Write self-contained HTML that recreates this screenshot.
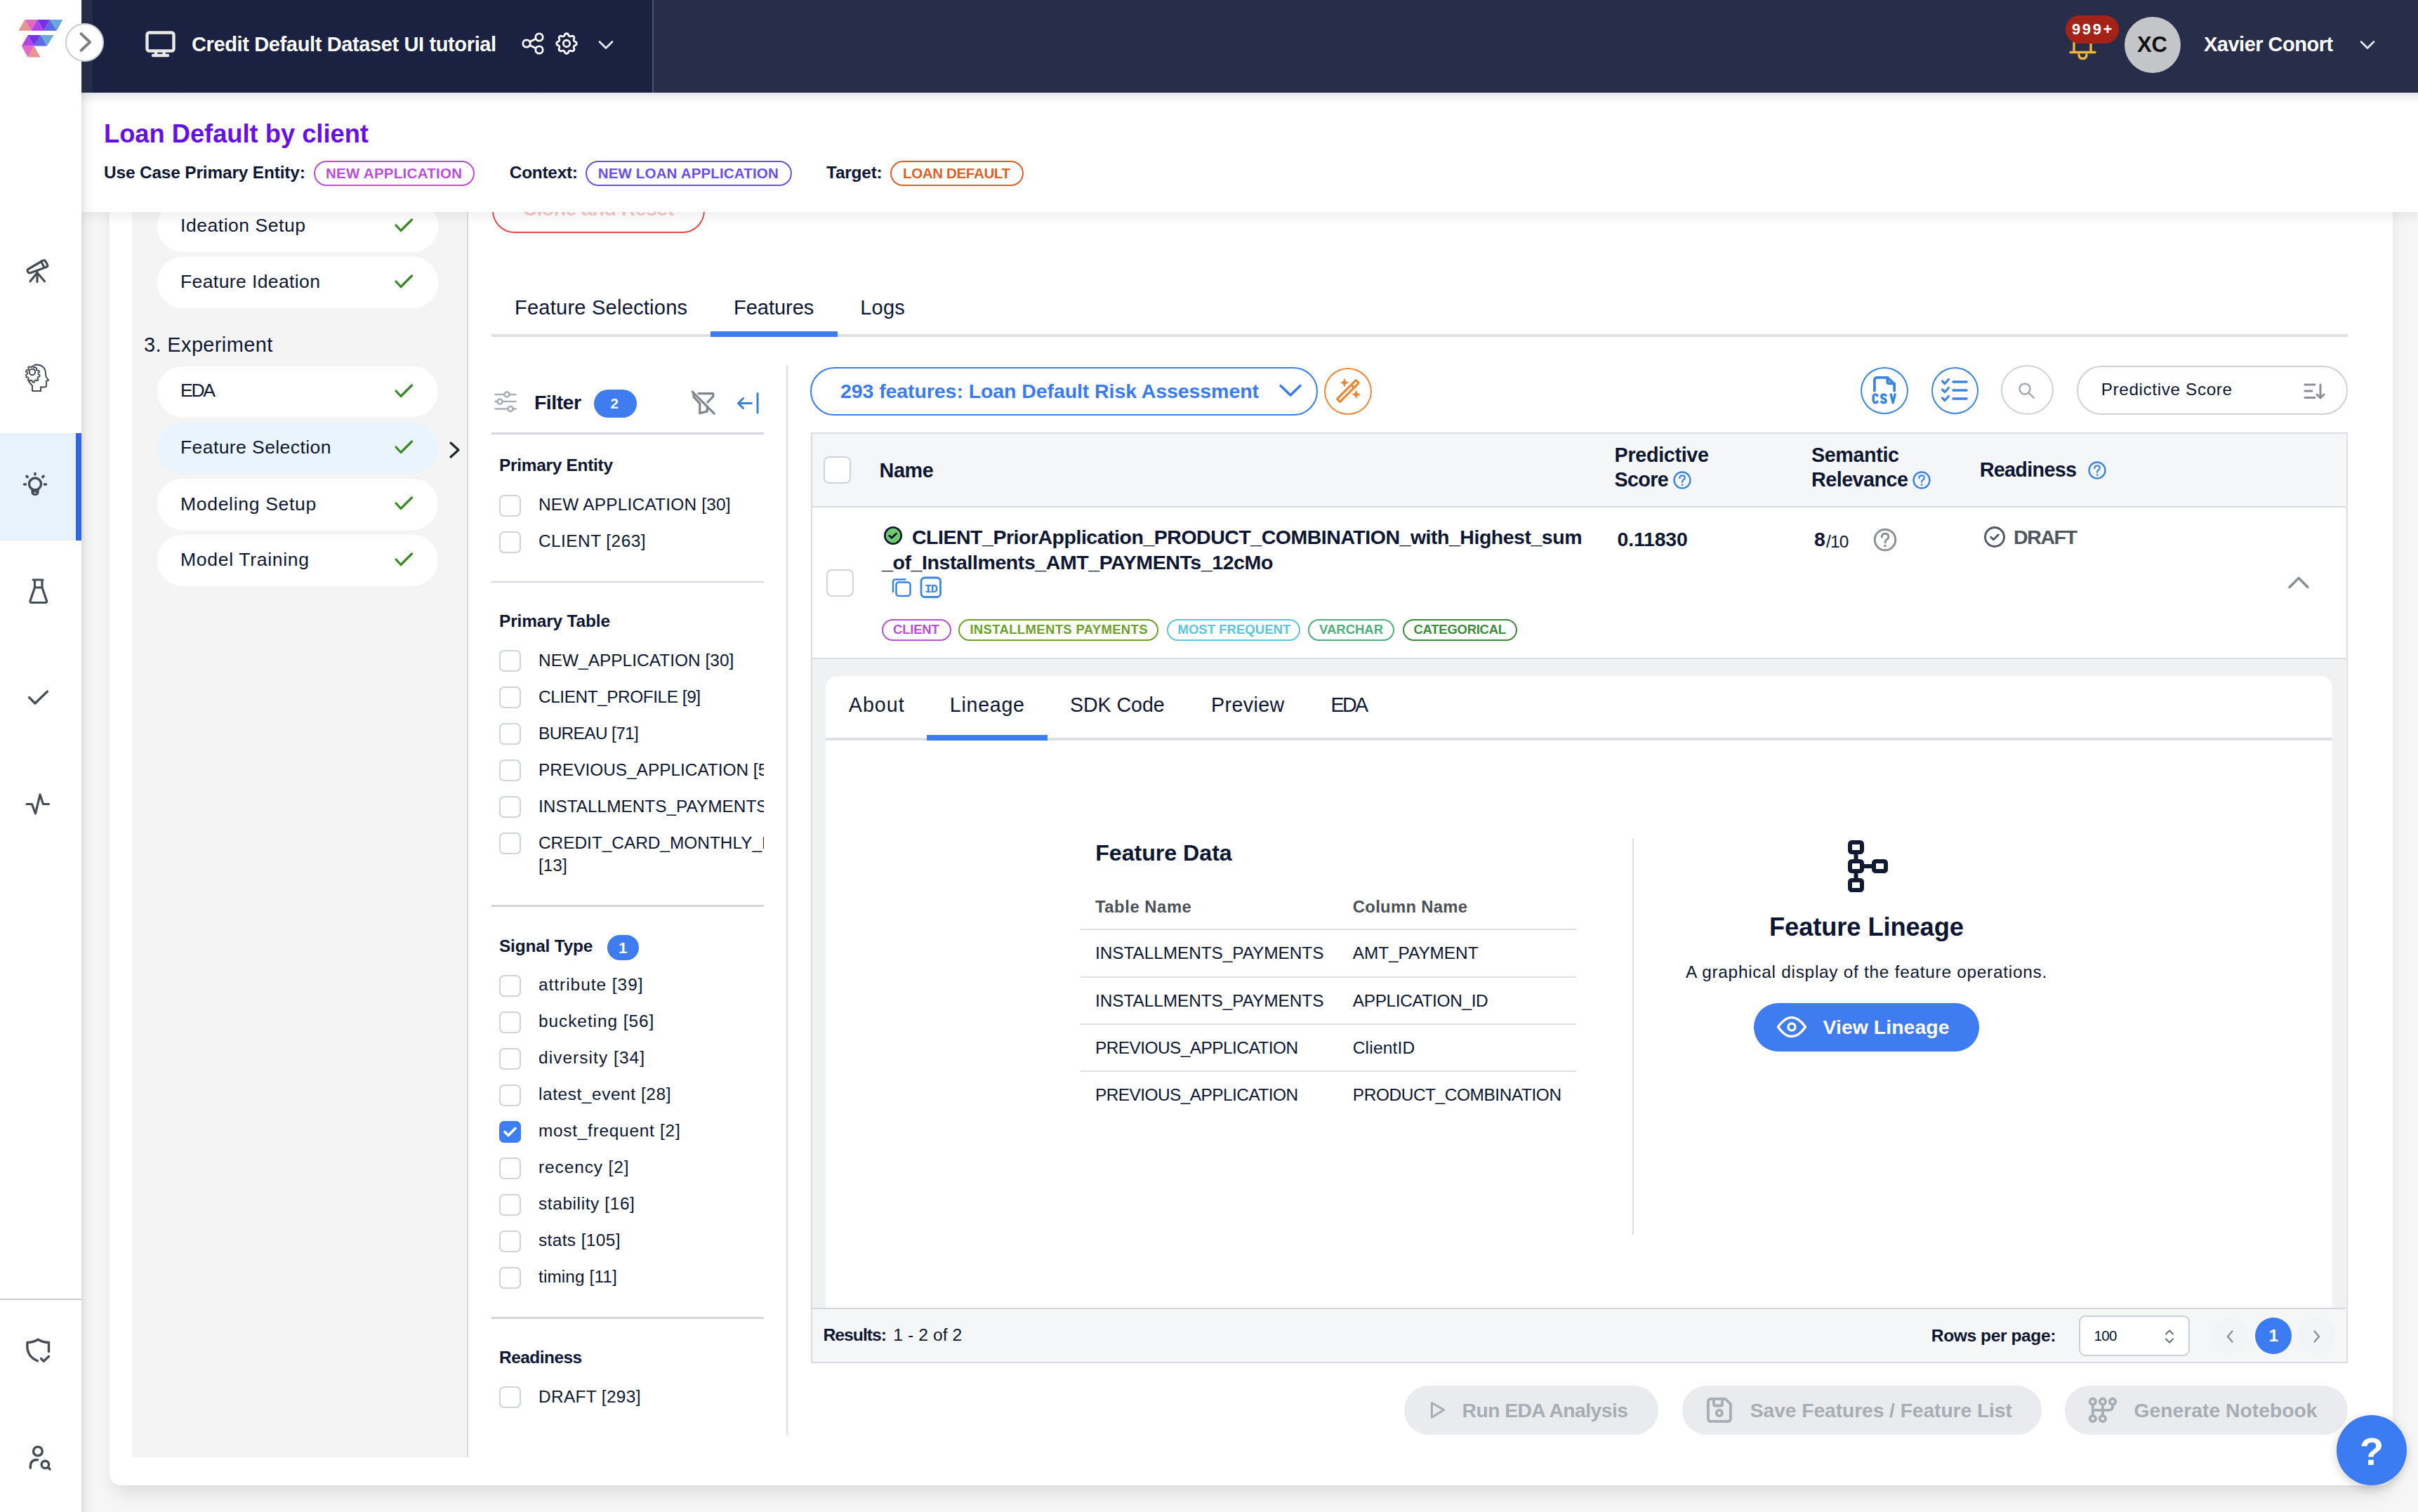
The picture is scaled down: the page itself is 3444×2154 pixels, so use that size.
<!DOCTYPE html>
<html><head><meta charset="utf-8"><title>Feature Selection</title>
<style>html,body{margin:0;padding:0;}
body{width:3444px;height:2154px;position:relative;overflow:hidden;background:#f6f6f7;font-family:"Liberation Sans",sans-serif;color:#0d1633;}
.a{position:absolute;box-sizing:border-box;}
.t{position:absolute;line-height:1;white-space:nowrap;}
svg{position:absolute;overflow:visible;}
</style></head>
<body>
<div class="a" style="left:156.0px;top:180.0px;width:3252.0px;height:1936.0px;background:#fff;border-radius:16px;box-shadow:0 16px 28px -8px rgba(0,0,0,0.13);"></div>
<div class="a" style="left:188.0px;top:180.0px;width:479.0px;height:1896.0px;background:#f4f4f5;border-right:2px solid #d9dce1;"></div>
<div class="a" style="left:224.0px;top:286.0px;width:400.0px;height:72.5px;background:#fff;border-radius:36px;"></div>
<div class="t step0" style="left:257.0px;top:308.3px;font-size:26.5px;letter-spacing:0.54px;">Ideation Setup</div>
<svg style="left:562px;top:311.0px" width="26" height="20" viewBox="0 0 26 20"><path d="M2 10 L9 17.5 L24.5 2" fill="none" stroke="#3a8a27" stroke-width="3.2" stroke-linecap="round" stroke-linejoin="round"/></svg>
<div class="a" style="left:224.0px;top:366.0px;width:400.0px;height:72.5px;background:#fff;border-radius:36px;"></div>
<div class="t step1" style="left:257.0px;top:388.4px;font-size:26.5px;letter-spacing:0.40px;">Feature Ideation</div>
<svg style="left:562px;top:391.0px" width="26" height="20" viewBox="0 0 26 20"><path d="M2 10 L9 17.5 L24.5 2" fill="none" stroke="#3a8a27" stroke-width="3.2" stroke-linecap="round" stroke-linejoin="round"/></svg>
<div class="a" style="left:224.0px;top:521.5px;width:400.0px;height:72.5px;background:#fff;border-radius:36px;"></div>
<div class="t step2" style="left:257.0px;top:543.1px;font-size:26.5px;letter-spacing:-2.25px;">EDA</div>
<svg style="left:562px;top:546.5px" width="26" height="20" viewBox="0 0 26 20"><path d="M2 10 L9 17.5 L24.5 2" fill="none" stroke="#3a8a27" stroke-width="3.2" stroke-linecap="round" stroke-linejoin="round"/></svg>
<div class="a" style="left:224.0px;top:602.0px;width:400.0px;height:72.5px;background:#eaf4fd;border-radius:36px;"></div>
<div class="t step3" style="left:257.0px;top:624.0px;font-size:26.5px;letter-spacing:0.42px;">Feature Selection</div>
<svg style="left:562px;top:627.0px" width="26" height="20" viewBox="0 0 26 20"><path d="M2 10 L9 17.5 L24.5 2" fill="none" stroke="#3a8a27" stroke-width="3.2" stroke-linecap="round" stroke-linejoin="round"/></svg>
<div class="a" style="left:224.0px;top:682.0px;width:400.0px;height:72.5px;background:#fff;border-radius:36px;"></div>
<div class="t step4" style="left:257.0px;top:704.6px;font-size:26.5px;letter-spacing:0.70px;">Modeling Setup</div>
<svg style="left:562px;top:707.0px" width="26" height="20" viewBox="0 0 26 20"><path d="M2 10 L9 17.5 L24.5 2" fill="none" stroke="#3a8a27" stroke-width="3.2" stroke-linecap="round" stroke-linejoin="round"/></svg>
<div class="a" style="left:224.0px;top:762.0px;width:400.0px;height:72.5px;background:#fff;border-radius:36px;"></div>
<div class="t step5" style="left:257.0px;top:783.9px;font-size:26.5px;letter-spacing:0.71px;">Model Training</div>
<svg style="left:562px;top:787.0px" width="26" height="20" viewBox="0 0 26 20"><path d="M2 10 L9 17.5 L24.5 2" fill="none" stroke="#3a8a27" stroke-width="3.2" stroke-linecap="round" stroke-linejoin="round"/></svg>
<div class="t exp" style="left:205.0px;top:476.5px;font-size:28.9px;letter-spacing:0.41px;">3. Experiment</div>
<svg style="left:639px;top:628px" width="18" height="26" viewBox="0 0 18 26"><path d="M3 3 L14 13 L3 23" fill="none" stroke="#23262b" stroke-width="3.2" stroke-linecap="round" stroke-linejoin="round"/></svg>
<div class="a" style="left:700.7px;top:240.0px;width:303.0px;height:91.5px;border:2.2px solid #e84a44;border-radius:32px;background:#fff;"></div>
<div class="t clone" style="left:744.4px;top:283.2px;font-size:28.5px;font-weight:700;color:#f3c9c9;letter-spacing:-0.54px;">Clone and Reset</div>
<div class="a" style="left:700.0px;top:476.0px;width:2644.0px;height:4.0px;background:#dde0e5;"></div>
<div class="a" style="left:1012.0px;top:472.0px;width:181.0px;height:8.0px;background:#3d7cf0;"></div>
<div class="t tab1" style="left:733.0px;top:423.5px;font-size:29.0px;letter-spacing:0.25px;">Feature Selections</div>
<div class="t tab2" style="left:1045.0px;top:423.5px;font-size:29.0px;letter-spacing:-0.02px;">Features</div>
<div class="t tab3" style="left:1225.3px;top:423.5px;font-size:29.0px;letter-spacing:0.17px;">Logs</div>
<div class="a" style="left:1120.0px;top:520.0px;width:2.0px;height:1524.0px;background:#d9dce1;"></div>
<svg style="left:704px;top:557px" width="32" height="34" viewBox="0 0 32 34" fill="none" stroke="#a9aeb4" stroke-width="2.6" stroke-linecap="round"><path d="M1.5 5h29M1.5 15h29M1.5 25.5h29"/><circle cx="18" cy="5" r="3.5" fill="#fff"/><circle cx="8" cy="15" r="3.5" fill="#fff"/><circle cx="23" cy="25.5" r="3.5" fill="#fff"/></svg>
<div class="t filter" style="left:761.0px;top:558.9px;font-size:28.5px;font-weight:700;letter-spacing:-0.54px;">Filter</div>
<div class="a" style="left:845.6px;top:555.0px;width:61.5px;height:40.0px;background:#3e7cf0;border-radius:20px;"></div>
<div class="t b2" style="left:869.5px;top:565.3px;font-size:20.5px;font-weight:700;color:#fff;">2</div>
<svg style="left:975px;top:545px" width="50" height="50" viewBox="0 0 50 50" fill="none" stroke="#80868d" stroke-width="3.2" stroke-linecap="round" stroke-linejoin="round"><path d="M19.9 15.6H40.7V19.9L32.8 28"/><path d="M13 14.9V20.3L21.8 29.8V43.7L32.3 40.9V34.2"/><path d="M11.2 13.2L42.2 44.2"/></svg>
<svg style="left:1049px;top:558px" width="34" height="34" viewBox="0 0 34 34" fill="none" stroke="#3b82d6" stroke-width="3" stroke-linecap="round" stroke-linejoin="round"><path d="M2.5 16.5h19M9.5 9.5l-7 7 7 7M30 2.5v27.5"/></svg>
<div class="a" style="left:700.0px;top:616.0px;width:388.0px;height:2.5px;background:#d3d8de;"></div>
<div class="t sec1" style="left:711.0px;top:651.3px;font-size:24.4px;font-weight:700;letter-spacing:-0.26px;">Primary Entity</div>
<div class="a" style="left:710.6px;top:704.5px;width:31.0px;height:31.0px;background:#fff;border:2px solid #cfd4db;border-radius:7px;"></div>
<div class="t pe0" style="left:767.0px;top:707.3px;font-size:24.4px;letter-spacing:0.23px;">NEW APPLICATION [30]</div>
<div class="a" style="left:710.6px;top:756.5px;width:31.0px;height:31.0px;background:#fff;border:2px solid #cfd4db;border-radius:7px;"></div>
<div class="t pe1" style="left:767.0px;top:759.3px;font-size:24.4px;letter-spacing:0.47px;">CLIENT [263]</div>
<div class="a" style="left:700.0px;top:827.5px;width:388.0px;height:2.5px;background:#d3d8de;"></div>
<div class="t sec2" style="left:711.0px;top:873.3px;font-size:24.4px;font-weight:700;letter-spacing:-0.13px;">Primary Table</div>
<div class="a" style="left:700px;top:900px;width:388px;height:380px;overflow:hidden;">
<div class="t pt0" style="left:67px;top:29.2px;font-size:24.4px;letter-spacing:0.05px;">NEW_APPLICATION [30]</div>
<div class="t pt1" style="left:67px;top:81.2px;font-size:24.4px;letter-spacing:-0.44px;">CLIENT_PROFILE [9]</div>
<div class="t pt2" style="left:67px;top:133.2px;font-size:24.4px;letter-spacing:-0.63px;">BUREAU [71]</div>
<div class="t pt3" style="left:67px;top:185.2px;font-size:24.4px;">PREVIOUS_APPLICATION [54]</div>
<div class="t pt4" style="left:67px;top:237.2px;font-size:24.4px;">INSTALLMENTS_PAYMENTS [24]</div>
<div class="t pt5" style="left:67px;top:289.2px;font-size:24.4px;">CREDIT_CARD_MONTHLY_B</div>
<div class="t pt5b" style="left:67px;top:320.7px;font-size:24.4px;">[13]</div>
</div>
<div class="a" style="left:710.6px;top:926.4px;width:31.0px;height:31.0px;background:#fff;border:2px solid #cfd4db;border-radius:7px;"></div>
<div class="a" style="left:710.6px;top:978.4px;width:31.0px;height:31.0px;background:#fff;border:2px solid #cfd4db;border-radius:7px;"></div>
<div class="a" style="left:710.6px;top:1030.4px;width:31.0px;height:31.0px;background:#fff;border:2px solid #cfd4db;border-radius:7px;"></div>
<div class="a" style="left:710.6px;top:1082.4px;width:31.0px;height:31.0px;background:#fff;border:2px solid #cfd4db;border-radius:7px;"></div>
<div class="a" style="left:710.6px;top:1134.4px;width:31.0px;height:31.0px;background:#fff;border:2px solid #cfd4db;border-radius:7px;"></div>
<div class="a" style="left:710.6px;top:1186.4px;width:31.0px;height:31.0px;background:#fff;border:2px solid #cfd4db;border-radius:7px;"></div>
<div class="a" style="left:700.0px;top:1289.0px;width:388.0px;height:2.5px;background:#d3d8de;"></div>
<div class="t sec3" style="left:711.0px;top:1336.3px;font-size:24.4px;font-weight:700;letter-spacing:-0.17px;">Signal Type</div>
<div class="a" style="left:865.0px;top:1332.0px;width:45.0px;height:36.0px;background:#3e7cf0;border-radius:18px;"></div>
<div class="t b1" style="left:881.0px;top:1340.4px;font-size:22.0px;font-weight:700;color:#fff;">1</div>
<div class="a" style="left:710.6px;top:1388.6px;width:31.0px;height:31.0px;background:#fff;border:2px solid #cfd4db;border-radius:7px;"></div>
<div class="t st0" style="left:767.0px;top:1391.4px;font-size:24.4px;letter-spacing:0.99px;">attribute [39]</div>
<div class="a" style="left:710.6px;top:1440.6px;width:31.0px;height:31.0px;background:#fff;border:2px solid #cfd4db;border-radius:7px;"></div>
<div class="t st1" style="left:767.0px;top:1443.4px;font-size:24.4px;letter-spacing:0.96px;">bucketing [56]</div>
<div class="a" style="left:710.6px;top:1492.6px;width:31.0px;height:31.0px;background:#fff;border:2px solid #cfd4db;border-radius:7px;"></div>
<div class="t st2" style="left:767.0px;top:1495.4px;font-size:24.4px;letter-spacing:1.08px;">diversity [34]</div>
<div class="a" style="left:710.6px;top:1544.6px;width:31.0px;height:31.0px;background:#fff;border:2px solid #cfd4db;border-radius:7px;"></div>
<div class="t st3" style="left:767.0px;top:1547.4px;font-size:24.4px;letter-spacing:0.59px;">latest_event [28]</div>
<div class="a" style="left:710.6px;top:1596.6px;width:31.0px;height:31.0px;background:#3d7ef2;border-radius:7px;"></div>
<svg style="left:710.6px;top:1596.6px" width="31" height="31" viewBox="0 0 31 31"><path d="M8 15.5l5 5 10-10" fill="none" stroke="#fff" stroke-width="3.6" stroke-linecap="round" stroke-linejoin="round"/></svg>
<div class="t st4" style="left:767.0px;top:1599.4px;font-size:24.4px;letter-spacing:0.74px;">most_frequent [2]</div>
<div class="a" style="left:710.6px;top:1648.6px;width:31.0px;height:31.0px;background:#fff;border:2px solid #cfd4db;border-radius:7px;"></div>
<div class="t st5" style="left:767.0px;top:1651.4px;font-size:24.4px;letter-spacing:0.93px;">recency [2]</div>
<div class="a" style="left:710.6px;top:1700.6px;width:31.0px;height:31.0px;background:#fff;border:2px solid #cfd4db;border-radius:7px;"></div>
<div class="t st6" style="left:767.0px;top:1703.4px;font-size:24.4px;letter-spacing:0.62px;">stability [16]</div>
<div class="a" style="left:710.6px;top:1752.6px;width:31.0px;height:31.0px;background:#fff;border:2px solid #cfd4db;border-radius:7px;"></div>
<div class="t st7" style="left:767.0px;top:1755.4px;font-size:24.4px;letter-spacing:0.39px;">stats [105]</div>
<div class="a" style="left:710.6px;top:1804.6px;width:31.0px;height:31.0px;background:#fff;border:2px solid #cfd4db;border-radius:7px;"></div>
<div class="t st8" style="left:767.0px;top:1807.4px;font-size:24.4px;letter-spacing:0.10px;">timing [11]</div>
<div class="a" style="left:700.0px;top:1876.0px;width:388.0px;height:2.5px;background:#d3d8de;"></div>
<div class="t sec4" style="left:711.0px;top:1921.6px;font-size:24.4px;font-weight:700;letter-spacing:-0.48px;">Readiness</div>
<div class="a" style="left:710.6px;top:1975.0px;width:31.0px;height:31.0px;background:#fff;border:2px solid #cfd4db;border-radius:7px;"></div>
<div class="t dr" style="left:767.0px;top:1977.8px;font-size:24.4px;letter-spacing:0.36px;">DRAFT [293]</div>
<div class="a" style="left:1154.0px;top:522.8px;width:723.0px;height:69.0px;border:2.5px solid #3b7bf0;border-radius:35px;background:#fff;"></div>
<div class="t dd" style="left:1197.0px;top:542.8px;font-size:28.5px;font-weight:700;color:#3b7bf0;letter-spacing:-0.08px;">293 features: Loan Default Risk Assessment</div>
<svg style="left:1821px;top:546px" width="34" height="22" viewBox="0 0 34 22"><path d="M3 3.5l14 13.5 14-13.5" fill="none" stroke="#3b7bf0" stroke-width="3.5" stroke-linecap="round" stroke-linejoin="round"/></svg>
<div class="a" style="left:1886.0px;top:523.5px;width:68.0px;height:67.0px;border:2.5px solid #e8893a;border-radius:50%;background:#fff;"></div>
<svg style="left:1886px;top:523px" width="68" height="68" viewBox="0 0 68 68"><g transform="rotate(-45 33.9 34)" fill="none" stroke="#e8893a" stroke-width="3.3" stroke-linejoin="round"><rect x="14.9" y="31.1" width="38" height="5.8" rx="0.8"/><path d="M43.5 31.1v5.8"/></g><path d="M29 16.900000000000002Q29.8 21.3 34.2 22.1Q29.8 22.900000000000002 29 27.3Q28.2 22.900000000000002 23.8 22.1Q28.2 21.3 29 16.900000000000002z M45.6 33.599999999999994Q46.4 38.0 50.800000000000004 38.8Q46.4 39.599999999999994 45.6 44.0Q44.800000000000004 39.599999999999994 40.4 38.8Q44.800000000000004 38.0 45.6 33.599999999999994z" fill="#e8893a" stroke="#e8893a" stroke-width="1.2" stroke-linejoin="round"/></svg>
<div class="a" style="left:2650.0px;top:522.5px;width:67.5px;height:67.0px;border:2.5px solid #3d85de;border-radius:50%;background:#fff;"></div>
<svg style="left:2660px;top:530px" width="48" height="50" viewBox="0 0 48 50" fill="none" stroke="#3d85de" stroke-width="3.8" stroke-linecap="round" stroke-linejoin="round"><path d="M9.9 26.6V11.8q0-4 4-4H28.3L38.1 17.2V26.6"/><path d="M28.3 7.8V13.4q0 3 3 3H38.1"/><path d="M14 33.5Q12.5 32 11 32Q8.1 32 8.1 37.85Q8.1 43.7 11 43.7Q12.5 43.7 14 42.2M26 33.3Q25 32 23 32Q19.9 32 19.9 34.9Q19.9 37.2 23 37.85Q26.1 38.5 26.1 40.8Q26.1 43.7 23 43.7Q20.9 43.7 19.9 42.4M33.3 32L36.2 43.7L39.1 32" stroke-width="3.5"/></svg>
<div class="a" style="left:2750.5px;top:522.5px;width:67.5px;height:67.0px;border:2.5px solid #3d85de;border-radius:50%;background:#fff;"></div>
<svg style="left:2764px;top:537px" width="40" height="36" viewBox="0 0 40 36" fill="none" stroke="#3d85de" stroke-width="3.2" stroke-linecap="round" stroke-linejoin="round"><path d="M2.5 6l3.5 3.5 5.5-6M2.5 18l3.5 3.5 5.5-6M2.5 30l3.5 3.5 5.5-6"/><path d="M18 7h19M18 19h19M18 31h19" stroke-width="3.6"/></svg>
<div class="a" style="left:2850.4px;top:520.3px;width:75.0px;height:71.2px;border:2px solid #cdd2d9;border-radius:50%;background:#fff;"></div>
<svg style="left:2873px;top:543px" width="30" height="30" viewBox="0 0 30 30" fill="none" stroke="#a3a8ae" stroke-width="2.4" stroke-linecap="round"><circle cx="11" cy="11" r="7.5"/><path d="M16.5 16.5l7.5 7.5"/></svg>
<div class="a" style="left:2958.0px;top:520.5px;width:385.5px;height:70.5px;border:2px solid #cdd2d9;border-radius:36px;background:#fff;"></div>
<div class="t ps" style="left:2992.7px;top:543.4px;font-size:24.3px;letter-spacing:0.63px;">Predictive Score</div>
<svg style="left:3281px;top:545px" width="32" height="26" viewBox="0 0 32 26" fill="none" stroke="#8a8f95" stroke-width="3" stroke-linecap="round" stroke-linejoin="round"><path d="M2 3h14M2 12h10M2 21.5h14M24 3v19M19 17l5 5 5-5"/></svg>
<div class="a" style="left:1155.0px;top:616.0px;width:2189.0px;height:1326.0px;border:2px solid #d9dce1;background:#fff;"></div>
<div class="a" style="left:1157.0px;top:618.0px;width:2184.0px;height:105.0px;background:#f5f6f8;border-bottom:2px solid #d9dce1;"></div>
<div class="a" style="left:1172.7px;top:650.4px;width:39.0px;height:39.0px;background:#fff;border:2px solid #cfd4db;border-radius:8px;"></div>
<div class="t hname" style="left:1252.5px;top:655.5px;font-size:28.8px;font-weight:700;letter-spacing:-0.38px;">Name</div>
<div class="t hp1" style="left:2299.6px;top:634.2px;font-size:28.8px;font-weight:700;letter-spacing:-0.36px;">Predictive</div>
<div class="t hp2" style="left:2299.6px;top:669.2px;font-size:28.8px;font-weight:700;letter-spacing:-0.74px;">Score</div>
<div class="t hs1" style="left:2580.0px;top:634.2px;font-size:28.8px;font-weight:700;letter-spacing:-0.44px;">Semantic</div>
<div class="t hs2" style="left:2580.0px;top:669.2px;font-size:28.8px;font-weight:700;letter-spacing:-0.56px;">Relevance</div>
<div class="t hr" style="left:2819.7px;top:655.0px;font-size:28.8px;font-weight:700;letter-spacing:-0.72px;">Readiness</div>
<svg style="left:2383.0px;top:670.6px" width="26" height="26" viewBox="0 0 26 26"><circle cx="13" cy="13" r="11.5" fill="none" stroke="#3d85de" stroke-width="2.4"/><path d="M9.3 10.2q0-3.9 3.8-3.9 3.7 0 3.7 3.4 0 2-2.2 3.1-1.5.8-1.5 2.6v.6" fill="none" stroke="#3d85de" stroke-width="2.2" stroke-linecap="round"/><circle cx="13.1" cy="19.6" r="1.4" fill="#3d85de"/></svg>
<svg style="left:2724.0px;top:670.6px" width="26" height="26" viewBox="0 0 26 26"><circle cx="13" cy="13" r="11.5" fill="none" stroke="#3d85de" stroke-width="2.4"/><path d="M9.3 10.2q0-3.9 3.8-3.9 3.7 0 3.7 3.4 0 2-2.2 3.1-1.5.8-1.5 2.6v.6" fill="none" stroke="#3d85de" stroke-width="2.2" stroke-linecap="round"/><circle cx="13.1" cy="19.6" r="1.4" fill="#3d85de"/></svg>
<svg style="left:2974.0px;top:656.7px" width="26" height="26" viewBox="0 0 26 26"><circle cx="13" cy="13" r="11.5" fill="none" stroke="#3d85de" stroke-width="2.4"/><path d="M9.3 10.2q0-3.9 3.8-3.9 3.7 0 3.7 3.4 0 2-2.2 3.1-1.5.8-1.5 2.6v.6" fill="none" stroke="#3d85de" stroke-width="2.2" stroke-linecap="round"/><circle cx="13.1" cy="19.6" r="1.4" fill="#3d85de"/></svg>
<div class="a" style="left:1157.0px;top:937.0px;width:2184.0px;height:2.0px;background:#d9dce1;"></div>
<div class="a" style="left:1176.5px;top:810.6px;width:39.0px;height:39.0px;background:#fff;border:2px solid #cfd4db;border-radius:8px;"></div>
<svg style="left:1258px;top:749px" width="28" height="28" viewBox="0 0 28 28"><circle cx="14" cy="14" r="11.7" fill="#6fc96f" stroke="#0d1633" stroke-width="2.6"/><path d="M8.8 14.2l3.3 3.1 6.4-6" fill="none" stroke="#0d1633" stroke-width="2.8" stroke-linecap="round" stroke-linejoin="round"/></svg>
<div class="t n1" style="left:1299.0px;top:750.5px;font-size:28.5px;font-weight:700;letter-spacing:-0.48px;">CLIENT_PriorApplication_PRODUCT_COMBINATION_with_Highest_sum</div>
<div class="t n2" style="left:1256.0px;top:786.5px;font-size:28.5px;font-weight:700;letter-spacing:-0.41px;">_of_Installments_AMT_PAYMENTs_12cMo</div>
<svg style="left:1270px;top:823px" width="30" height="30" viewBox="0 0 30 30" fill="none" stroke="#3d85de" stroke-width="2.5" stroke-linejoin="round" stroke-linecap="round"><path d="M2 20V6q0-3.5 3.5-3.5h14"/><rect x="6.5" y="6.5" width="20" height="19.5" rx="3.5"/></svg>
<svg style="left:1310px;top:821px" width="32" height="32" viewBox="0 0 32 32"><rect x="2" y="2" width="27.5" height="27.5" rx="5" fill="none" stroke="#3d85de" stroke-width="2.8"/><text x="15.8" y="22.5" text-anchor="middle" font-family="Liberation Mono" font-weight="700" font-size="17" letter-spacing="-1.5" fill="#3d85de">ID</text></svg>
<div class="a" style="left:1256.0px;top:881.5px;width:98.7px;height:31.0px;border:2.5px solid #b84fd6;border-radius:16px;"></div>
<div class="t tag0" style="left:1272.0px;top:888.3px;font-size:18.5px;font-weight:700;color:#b84fd6;letter-spacing:-0.20px;">CLIENT</div>
<div class="a" style="left:1365.4px;top:881.5px;width:284.6px;height:31.0px;border:2.5px solid #6fa12a;border-radius:16px;"></div>
<div class="t tag1" style="left:1381.4px;top:888.3px;font-size:18.5px;font-weight:700;color:#6fa12a;letter-spacing:0.34px;">INSTALLMENTS PAYMENTS</div>
<div class="a" style="left:1661.5px;top:881.5px;width:190.9px;height:31.0px;border:2.5px solid #5ec3dc;border-radius:16px;"></div>
<div class="t tag2" style="left:1677.5px;top:888.3px;font-size:18.5px;font-weight:700;color:#5ec3dc;letter-spacing:0.03px;">MOST FREQUENT</div>
<div class="a" style="left:1863.0px;top:881.5px;width:123.0px;height:31.0px;border:2.5px solid #4fae7a;border-radius:16px;"></div>
<div class="t tag3" style="left:1879.0px;top:888.3px;font-size:18.5px;font-weight:700;color:#4fae7a;letter-spacing:-0.02px;">VARCHAR</div>
<div class="a" style="left:1997.5px;top:881.5px;width:163.2px;height:31.0px;border:2.5px solid #3c8a3c;border-radius:16px;"></div>
<div class="t tag4" style="left:2013.5px;top:888.3px;font-size:18.5px;font-weight:700;color:#3c8a3c;letter-spacing:-0.27px;">CATEGORICAL</div>
<div class="t score" style="left:2303.6px;top:753.9px;font-size:28.5px;font-weight:700;letter-spacing:-0.21px;">0.11830</div>
<div class="t rel8" style="left:2584.0px;top:753.8px;font-size:28.5px;font-weight:700;">8</div>
<div class="t rel10" style="left:2601.0px;top:760.2px;font-size:24.4px;letter-spacing:-0.81px;">/10</div>
<svg style="left:2668px;top:752px" width="34" height="34" viewBox="0 0 34 34"><circle cx="17" cy="17" r="14.8" fill="none" stroke="#8d9297" stroke-width="3"/><path d="M12.2 13.3q0-5 4.9-5 4.8 0 4.8 4.4 0 2.6-2.9 4-1.9 1-1.9 3.4v.8" fill="none" stroke="#8d9297" stroke-width="2.9" stroke-linecap="round"/><circle cx="17.1" cy="25.6" r="1.8" fill="#8d9297"/></svg>
<svg style="left:2825px;top:749px" width="32" height="32" viewBox="0 0 32 32"><circle cx="16" cy="16" r="13.5" fill="none" stroke="#50565e" stroke-width="2.8"/><path d="M10.8 16.3l3.5 3.4 7-7" fill="none" stroke="#50565e" stroke-width="2.8" stroke-linecap="round" stroke-linejoin="round"/></svg>
<div class="t draft" style="left:2868.0px;top:751.3px;font-size:28.5px;font-weight:700;color:#50565e;letter-spacing:-1.39px;">DRAFT</div>
<svg style="left:3258px;top:820px" width="32" height="20" viewBox="0 0 32 20"><path d="M3 16.5L16 3.5l13 13" fill="none" stroke="#868c93" stroke-width="3.4" stroke-linecap="round" stroke-linejoin="round"/></svg>
<div class="a" style="left:1157.0px;top:939.0px;width:2184.0px;height:924.0px;background:#f0f1f3;"></div>
<div class="a" style="left:1176.0px;top:963.0px;width:2146.0px;height:900.0px;background:#fff;border-radius:16px 16px 0 0;"></div>
<div class="a" style="left:1176.0px;top:1051.0px;width:2146.0px;height:4.0px;background:#dde0e5;"></div>
<div class="a" style="left:1320.0px;top:1046.5px;width:172.0px;height:8.5px;background:#3d7cf0;"></div>
<div class="t dt0" style="left:1208.8px;top:990.0px;font-size:28.6px;letter-spacing:1.04px;">About</div>
<div class="t dt1" style="left:1352.8px;top:990.0px;font-size:28.6px;letter-spacing:0.74px;">Lineage</div>
<div class="t dt2" style="left:1524.0px;top:990.0px;font-size:28.6px;letter-spacing:-0.06px;">SDK Code</div>
<div class="t dt3" style="left:1725.0px;top:990.0px;font-size:28.6px;letter-spacing:0.42px;">Preview</div>
<div class="t dt4" style="left:1895.5px;top:990.0px;font-size:28.6px;letter-spacing:-2.65px;">EDA</div>
<div class="t fd" style="left:1560.2px;top:1198.5px;font-size:32.2px;font-weight:700;letter-spacing:-0.04px;">Feature Data</div>
<div class="t th1" style="left:1560.0px;top:1279.7px;font-size:23.8px;font-weight:700;color:#4b5157;letter-spacing:0.56px;">Table Name</div>
<div class="t th2" style="left:1926.8px;top:1279.7px;font-size:23.8px;font-weight:700;color:#4b5157;letter-spacing:0.31px;">Column Name</div>
<div class="a" style="left:1539.0px;top:1323.0px;width:706.0px;height:2.0px;background:#dde0e5;"></div>
<div class="a" style="left:1539.0px;top:1391.0px;width:706.0px;height:2.0px;background:#dde0e5;"></div>
<div class="a" style="left:1539.0px;top:1458.0px;width:706.0px;height:2.0px;background:#dde0e5;"></div>
<div class="a" style="left:1539.0px;top:1525.0px;width:706.0px;height:2.0px;background:#dde0e5;"></div>
<div class="t r0a" style="left:1560.0px;top:1346.1px;font-size:24.4px;letter-spacing:-0.06px;">INSTALLMENTS_PAYMENTS</div>
<div class="t r0b" style="left:1926.8px;top:1346.1px;font-size:24.4px;letter-spacing:-0.06px;">AMT_PAYMENT</div>
<div class="t r1a" style="left:1560.0px;top:1413.5px;font-size:24.4px;letter-spacing:-0.06px;">INSTALLMENTS_PAYMENTS</div>
<div class="t r1b" style="left:1926.8px;top:1413.5px;font-size:24.4px;letter-spacing:-0.35px;">APPLICATION_ID</div>
<div class="t r2a" style="left:1560.0px;top:1480.9px;font-size:24.4px;letter-spacing:-0.53px;">PREVIOUS_APPLICATION</div>
<div class="t r2b" style="left:1926.8px;top:1480.9px;font-size:24.4px;letter-spacing:0.21px;">ClientID</div>
<div class="t r3a" style="left:1560.0px;top:1548.3px;font-size:24.4px;letter-spacing:-0.53px;">PREVIOUS_APPLICATION</div>
<div class="t r3b" style="left:1926.8px;top:1548.3px;font-size:24.4px;letter-spacing:-0.40px;">PRODUCT_COMBINATION</div>
<div class="a" style="left:2325.0px;top:1195.0px;width:2.0px;height:564.0px;background:#dcdfe4;"></div>
<svg style="left:2630px;top:1196px" width="62" height="78" viewBox="0 0 62 78" fill="none" stroke="#111a33" stroke-width="6"><rect x="5" y="4" width="17" height="14" rx="2.5"/><rect x="5" y="31" width="17" height="14" rx="2.5"/><rect x="5" y="58" width="17" height="14" rx="2.5"/><rect x="39" y="31" width="17" height="14" rx="2.5"/><path d="M13.5 18v13M13.5 45v13M22 38h17"/></svg>
<div class="t fl" style="left:2520.0px;top:1303.2px;font-size:36.3px;font-weight:700;letter-spacing:-0.10px;">Feature Lineage</div>
<div class="t desc" style="left:2401.0px;top:1373.2px;font-size:24.4px;letter-spacing:0.73px;">A graphical display of the feature operations.</div>
<div class="a" style="left:2498.0px;top:1428.6px;width:320.7px;height:69.0px;background:#3f7cf2;border-radius:35px;"></div>
<svg style="left:2530px;top:1446px" width="44" height="34" viewBox="0 0 44 34" fill="none" stroke="#fff" stroke-width="3.4"><path d="M2.5 17Q12 3.5 22 3.5T41.5 17Q32 30.5 22 30.5T2.5 17z" stroke-linejoin="round"/><circle cx="22" cy="17" r="5"/></svg>
<div class="t vl" style="left:2596.5px;top:1448.9px;font-size:28.4px;font-weight:700;color:#fff;letter-spacing:0.06px;">View Lineage</div>
<div class="a" style="left:1157.0px;top:1863.0px;width:2184.0px;height:77.0px;background:#f5f6f8;border-top:2px solid #d3d7dd;"></div>
<div class="t res1" style="left:1172.5px;top:1890.4px;font-size:24.7px;font-weight:700;letter-spacing:-0.99px;">Results:</div>
<div class="t res2" style="left:1272.3px;top:1890.4px;font-size:24.7px;letter-spacing:0.06px;">1 - 2 of 2</div>
<div class="t rpp" style="left:2750.8px;top:1890.5px;font-size:24.6px;font-weight:700;letter-spacing:-0.43px;">Rows per page:</div>
<div class="a" style="left:2961.0px;top:1873.8px;width:158.0px;height:58.0px;background:#fff;border:2px solid #cbd0d7;border-radius:9px;"></div>
<div class="t hund" style="left:2982.5px;top:1892.8px;font-size:20.5px;letter-spacing:-0.66px;">100</div>
<svg style="left:3082px;top:1893px" width="16" height="22" viewBox="0 0 16 22" fill="none" stroke="#70757b" stroke-width="2.2" stroke-linecap="round" stroke-linejoin="round"><path d="M3 7.5L8 2.5l5 5M3 14.5l5 5 5-5"/></svg>
<div class="a" style="left:3150.0px;top:1877.0px;width:52.0px;height:52.0px;background:#f2f3f5;border-radius:50%;"></div>
<div class="a" style="left:3274.0px;top:1877.0px;width:52.0px;height:52.0px;background:#f2f3f5;border-radius:50%;"></div>
<svg style="left:3168px;top:1893px" width="16" height="22" viewBox="0 0 16 22"><path d="M11.5 3.5L5 11l6.5 7.5" fill="none" stroke="#878c92" stroke-width="2.3" stroke-linecap="round" stroke-linejoin="round"/></svg>
<svg style="left:3292px;top:1893px" width="16" height="22" viewBox="0 0 16 22"><path d="M4.5 3.5L11 11l-6.5 7.5" fill="none" stroke="#878c92" stroke-width="2.3" stroke-linecap="round" stroke-linejoin="round"/></svg>
<div class="a" style="left:3212.0px;top:1877.0px;width:52.0px;height:52.0px;background:#3b7cf2;border-radius:50%;"></div>
<div class="t pg" style="left:3231.5px;top:1890.5px;font-size:24.4px;font-weight:700;color:#fff;">1</div>
<div class="a" style="left:1999.9px;top:1974.0px;width:362.6px;height:70.0px;background:#e9ebee;border-radius:35px;"></div>
<div class="a" style="left:2395.6px;top:1974.0px;width:512.9px;height:70.0px;background:#e9ebee;border-radius:35px;"></div>
<div class="a" style="left:2940.7px;top:1974.0px;width:403.0px;height:70.0px;background:#e9ebee;border-radius:35px;"></div>
<svg style="left:2034px;top:1993px" width="28" height="32" viewBox="0 0 28 32"><path d="M5.4 5.5V26.3L22.5 15.6z" fill="none" stroke="#a7adb4" stroke-width="2.9" stroke-linejoin="round"/></svg>
<div class="t btn1" style="left:2082.6px;top:1995.1px;font-size:28.2px;font-weight:700;color:#a7adb4;letter-spacing:-0.50px;">Run EDA Analysis</div>
<svg style="left:2429px;top:1989px" width="40" height="40" viewBox="0 0 40 40" fill="none" stroke="#a7adb4" stroke-width="3.8" stroke-linejoin="round"><path d="M3.9 8q0-4.1 4.1-4.1H28.5L35.9 11.3V31.8q0 4.1-4.1 4.1H8q-4.1 0-4.1-4.1z"/><path d="M11.9 3.9V11.5q0 2 2 2H22.1q2 0 2-2V3.9"/><circle cx="19.9" cy="24" r="4.1"/></svg>
<div class="t btn2" style="left:2492.8px;top:1995.1px;font-size:28.2px;font-weight:700;color:#a7adb4;letter-spacing:-0.05px;">Save Features / Feature List</div>
<svg style="left:2973px;top:1989px" width="46" height="42" viewBox="0 0 46 42" fill="none" stroke="#a7adb4" stroke-width="3.8"><circle cx="7.8" cy="7.7" r="4.2"/><circle cx="21.9" cy="7.7" r="4.2"/><circle cx="36" cy="7.7" r="4.2"/><circle cx="7.8" cy="32" r="4.2"/><circle cx="21.9" cy="32" r="4.2"/><path d="M7.8 11.9V27.8M21.9 11.9V27.8M7.8 19.8H31q5 0 5-5V11.9"/></svg>
<div class="t btn3" style="left:3039.4px;top:1995.1px;font-size:28.2px;font-weight:700;color:#a7adb4;letter-spacing:0.07px;">Generate Notebook</div>
<div class="a" style="left:116.0px;top:132.0px;width:3328.0px;height:170.0px;background:linear-gradient(180deg,#e4e6ea 0px,#f7f7f9 10px,#fff 16px);box-shadow:0 8px 14px rgba(0,0,0,0.06);"></div>
<div class="t title" style="left:148.0px;top:173.2px;font-size:36.3px;font-weight:700;color:#6610e8;letter-spacing:-0.01px;">Loan Default by client</div>
<div class="t uc" style="left:148.0px;top:234.2px;font-size:24.4px;font-weight:700;letter-spacing:-0.14px;">Use Case Primary Entity:</div>
<div class="a" style="left:447.0px;top:229.0px;width:229.0px;height:35.5px;border:2.5px solid #b84fd6;border-radius:18px;background:#fff;"></div>
<div class="t bd1" style="left:464.0px;top:236.6px;font-size:20.5px;font-weight:700;color:#b84fd6;letter-spacing:0.27px;">NEW APPLICATION</div>
<div class="t ctx" style="left:725.8px;top:234.2px;font-size:24.4px;font-weight:700;letter-spacing:-0.25px;">Context:</div>
<div class="a" style="left:834.0px;top:229.0px;width:294.0px;height:35.5px;border:2.5px solid #6a50e8;border-radius:18px;background:#fff;"></div>
<div class="t bd2" style="left:851.7px;top:236.6px;font-size:20.5px;font-weight:700;color:#6a50e8;letter-spacing:0.16px;">NEW LOAN APPLICATION</div>
<div class="t tgt" style="left:1177.0px;top:234.2px;font-size:24.4px;font-weight:700;letter-spacing:-0.19px;">Target:</div>
<div class="a" style="left:1268.0px;top:229.0px;width:190.0px;height:35.5px;border:2.5px solid #d9622b;border-radius:18px;background:#fff;"></div>
<div class="t bd3" style="left:1286.0px;top:236.6px;font-size:20.5px;font-weight:700;color:#d9622b;letter-spacing:-0.34px;">LOAN DEFAULT</div>
<div class="a" style="left:116.0px;top:0.0px;width:3328.0px;height:132.0px;background:#282e4a;"></div>
<div class="a" style="left:116.0px;top:0.0px;width:814.0px;height:132.0px;background:#1b2140;"></div>
<div class="a" style="left:929.0px;top:0.0px;width:2.0px;height:132.0px;background:#4d536b;"></div>
<div class="a" style="left:116.0px;top:0.0px;width:16.0px;height:132.0px;background:#262c47;"></div>
<svg style="left:206px;top:43px" width="45" height="40" viewBox="0 0 45 40" fill="none" stroke="#e8e8e8" stroke-width="4.4" stroke-linejoin="round" stroke-linecap="round"><rect x="3.5" y="3.5" width="38" height="26" rx="3"/><path d="M16 30v6M27.5 30v6M12 36h21"/></svg>
<div class="t proj" style="left:273.0px;top:48.6px;font-size:29.0px;font-weight:700;color:#fff;letter-spacing:-0.37px;">Credit Default Dataset UI tutorial</div>
<svg style="left:742px;top:45px" width="36" height="36" viewBox="0 0 36 36" fill="none" stroke="#fff" stroke-width="2.8"><circle cx="8" cy="17" r="5.2"/><circle cx="26" cy="8" r="5.2"/><circle cx="26" cy="26" r="5.2"/><path d="M12.7 14.6l8.6-4.3M12.7 19.4l8.6 4.3"/></svg>
<svg style="left:788px;top:43px" width="38" height="38" viewBox="0 0 24 24" fill="none" stroke="#fff" stroke-width="1.75" stroke-linecap="round" stroke-linejoin="round"><path d="M10.325 4.317c.426-1.756 2.924-1.756 3.35 0a1.724 1.724 0 002.573 1.066c1.543-.94 3.31.826 2.37 2.37a1.724 1.724 0 001.065 2.572c1.756.426 1.756 2.924 0 3.35a1.724 1.724 0 00-1.066 2.573c.94 1.543-.826 3.31-2.37 2.37a1.724 1.724 0 00-2.572 1.065c-.426 1.756-2.924 1.756-3.35 0a1.724 1.724 0 00-2.573-1.066c-1.543.94-3.31-.826-2.37-2.37a1.724 1.724 0 00-1.065-2.572c-1.756-.426-1.756-2.924 0-3.35a1.724 1.724 0 001.066-2.573c-.94-1.543.826-3.31 2.37-2.37.996.608 2.296.07 2.572-1.065z"/><circle cx="12" cy="12" r="3"/></svg>
<svg style="left:851px;top:56px" width="24" height="16" viewBox="0 0 24 16"><path d="M3 3.5l9 9 9-9" fill="none" stroke="#e8e8e8" stroke-width="2.8" stroke-linecap="round" stroke-linejoin="round"/></svg>
<svg style="left:2944px;top:44px" width="46" height="44" viewBox="0 0 46 44" fill="none" stroke="#f0b43c" stroke-width="3.4" stroke-linecap="round" stroke-linejoin="round"><path d="M10 30V14q0-11 12-11t12 11v16M5 30.5h35M17 34q0 5.5 5.5 5.5T28 34"/></svg>
<div class="a" style="left:2942.0px;top:22.0px;width:76.0px;height:40.0px;background:#a52218;border-radius:20px;"></div>
<div class="t n999" style="left:2951.0px;top:31.4px;font-size:22.0px;font-weight:700;color:#fff;letter-spacing:2.58px;">999+</div>
<div class="a" style="left:3026.0px;top:24.0px;width:80.0px;height:80.0px;background:#c4c5c8;border-radius:50%;"></div>
<div class="t xc" style="left:3044.0px;top:48.1px;font-size:31.0px;font-weight:700;color:#111;letter-spacing:-0.07px;">XC</div>
<div class="t user" style="left:3139.0px;top:48.6px;font-size:28.9px;font-weight:700;color:#fff;letter-spacing:-0.45px;">Xavier Conort</div>
<svg style="left:3360px;top:56px" width="24" height="16" viewBox="0 0 24 16"><path d="M3 3.5l9 9 9-9" fill="none" stroke="#e8e8e8" stroke-width="2.8" stroke-linecap="round" stroke-linejoin="round"/></svg>
<div class="a" style="left:116.0px;top:132.0px;width:18.0px;height:2022.0px;background:linear-gradient(90deg,rgba(0,0,0,0.10),rgba(0,0,0,0.03) 40%,rgba(0,0,0,0));"></div>
<div class="a" style="left:0.0px;top:0.0px;width:116.0px;height:2154.0px;background:#fff;"></div>
<div class="a" style="left:0.0px;top:617.0px;width:116.0px;height:153.0px;background:#e8f2fd;"></div>
<div class="a" style="left:108.0px;top:617.0px;width:8.0px;height:153.0px;background:#3366dd;"></div>
<div class="a" style="left:0.0px;top:1849.5px;width:116.0px;height:2.5px;background:#c9ced5;"></div>
<svg style="left:0;top:0" width="100" height="90" viewBox="0 0 100 90"><polygon points="26.3,43.7 35.2,28.1 44.2,43.7" fill="#e69490"/><polygon points="35.2,28.1 53.1,28.1 44.2,43.7" fill="#e06bc4"/><polygon points="44.2,43.7 53.1,28.1 62.5,43.7" fill="#b044e6"/><polygon points="53.1,28.1 71,28.1 62.5,43.7" fill="#7434e6"/><polygon points="62.5,43.7 71,28.1 80.9,43.7" fill="#5b6ae0"/><polygon points="71,28.1 89.3,28.1 80.9,43.7" fill="#6aa6e0"/><polygon points="30.8,65.5 39.7,50.1 48.6,65.5" fill="#b044e6"/><polygon points="39.7,50.1 58.1,50.1 48.6,65.5" fill="#7434e6"/><polygon points="48.6,65.5 58.1,50.1 67,65.5" fill="#5b6ae0"/><polygon points="58.1,50.1 76.4,50.1 67,65.5" fill="#6aa6e0"/><polygon points="30.8,65.5 48.6,65.5 39.7,81.4" fill="#e06bc4"/><polygon points="39.7,81.4 48.6,65.5 57.6,81.4" fill="#e69490"/></svg>
<svg style="left:34px;top:366px" width="40" height="40" viewBox="0 0 40 40" fill="none" stroke="#474d55" stroke-width="3.2" stroke-linecap="round" stroke-linejoin="round"><path d="M6 17.5L26.5 5.5q3-1.5 4.5 1l2.5 4.5q1 2.5-1.5 3.5L10 22.5q-3.5 1-4.5-1.5-1-2.5.5-3.5z"/><path d="M24.5 6.5l4.5 8.5"/><path d="M19 20v15.5M19 22.5L9 34.8M19 22.5l10.5 12.3"/></svg>
<svg style="left:33px;top:516px" width="42" height="44" viewBox="0 0 42 44" fill="none" stroke="#474d55" stroke-width="2"><path d="M13 41V33.5q-5-5-6.5-9.5M15 4q9-1.5 13.5 3 3.5 3.5 3.5 9.5l.5 4 3.5 5-3 1.5v6q0 2.5-2.5 2.5h-5.5V41H13"/><circle cx="13" cy="14" r="4.2"/><path d="M13 5.5l1.6.3.7 2.2 2-1 2 1.5-.8 2 1.7 1.6 2.1-.6 1 2.3-1.9 1.2.3 2.4 2 .8-.4 2.5-2.2.2-.8 2.2 1.3 1.8-1.9 1.6-1.8-1.3-2 1v2.3h-2.6l-.6-2.2-2.1-.8-1.7 1.5-1.9-1.6 1-2-1.3-1.9-2.2.1L4 18l2-1v-2.4l-2-1 .7-2.4 2.2.3 1.2-2-1.1-1.9 2-1.5 1.7 1.4 2.1-.8z" stroke-width="1.8"/></svg>
<svg style="left:32px;top:672px" width="36" height="36" viewBox="0 0 36 36" fill="none" stroke="#474d55" stroke-linecap="round"><circle cx="18" cy="17.5" r="8.5" stroke-width="3.4"/><path d="M14 25.5v3q0 4 4 4t4-4v-3M14.5 28h7" stroke-width="3.2"/><path d="M18 2.5v1.5M6 6.5l1.2 1M30 6.5l-1.2 1M2.5 18h2M31.5 18h2" stroke-width="3.6"/></svg>
<svg style="left:40px;top:823px" width="30" height="38" viewBox="0 0 30 38" fill="none" stroke="#474d55" stroke-width="3.2" stroke-linecap="round" stroke-linejoin="round"><path d="M7 3h14M9.5 3v11L3 33q-.5 2.5 2 2.5h19.5q2.5 0 2-2.5L20 14V3M10 14h10"/></svg>
<svg style="left:38px;top:982px" width="34" height="24" viewBox="0 0 34 24" fill="none" stroke="#474d55" stroke-width="3.2" stroke-linecap="round" stroke-linejoin="round"><path d="M3.5 11.5l8.5 8.5L29.5 3"/></svg>
<svg style="left:36px;top:1130px" width="36" height="32" viewBox="0 0 36 32" fill="none" stroke="#474d55" stroke-width="3.2" stroke-linecap="round" stroke-linejoin="round"><path d="M2 15.5h7.5l5 13.5 6.5-27 4.5 13.5h8"/></svg>
<svg style="left:30px;top:1900px" width="50" height="46" viewBox="0 0 50 46" fill="none" stroke="#474d55" stroke-width="3.4" stroke-linecap="round" stroke-linejoin="round"><path d="M23.5 38.7Q9.5 33 8.9 19V12.5Q17 12.5 24.2 8.2Q31.4 12.5 39.5 12.5V25.6"/><path d="M28.5 35.4l3.7 3.8 7.3-7"/></svg>
<svg style="left:30px;top:2050px" width="50" height="50" viewBox="0 0 50 50" fill="none" stroke="#474d55" stroke-width="3.4" stroke-linecap="round" stroke-linejoin="round"><circle cx="23.9" cy="17.5" r="6.4"/><path d="M13.3 41.3V39.5q0-9.5 8.5-9.7h1.7"/><circle cx="34.4" cy="36.4" r="5.2"/><path d="M38.3 40.3L41 43"/></svg>
<div class="a" style="left:92.5px;top:32.5px;width:55.0px;height:55.0px;background:#fff;border:2.5px solid #c9ced6;border-radius:50%;"></div>
<svg style="left:110px;top:44px" width="24" height="32" viewBox="0 0 24 32"><path d="M5.6 4.1L18 16 5.6 27.9" fill="none" stroke="#808080" stroke-width="4" stroke-linecap="round" stroke-linejoin="round"/></svg>
<div class="a" style="left:3328.0px;top:2016.0px;width:100.0px;height:100.0px;background:#3b7cf2;border-radius:50%;box-shadow:0 4px 14px rgba(0,0,0,0.18);"></div>
<div class="t fab" style="left:3361.0px;top:2040.3px;font-size:56.0px;font-weight:700;color:#fff;">?</div>
</body></html>
